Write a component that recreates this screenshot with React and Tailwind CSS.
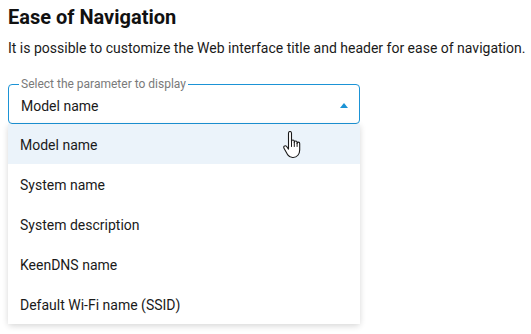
import { useState } from "react";

const options = [
  "Model name",
  "System name",
  "System description",
  "KeenDNS name",
  "Default Wi-Fi name (SSID)",
];

function HandCursor() {
  return (
    <svg width="20" height="28" viewBox="0 0 20 28" className="absolute left-[275px] top-[7px]">
      <path
        d="M5.5 2.2c0-1 .7-1.7 1.5-1.7s1.5.7 1.5 1.7v8.3c0-.9.7-1.5 1.4-1.5s1.4.6 1.4 1.5v1c0-.9.7-1.5 1.4-1.5s1.4.6 1.4 1.5v1c0-.8.6-1.4 1.3-1.4s1.3.6 1.3 1.4v6.5c0 4-2.6 7.5-6.5 7.5H9.5c-2 0-3.6-1-4.7-2.6L1 17.2c-.5-.8-.3-1.8.5-2.2.7-.4 1.6-.2 2.1.5l1.9 2.6V2.2z"
        fill="#fff"
        stroke="#1a1a1a"
        strokeWidth="1.1"
        strokeLinejoin="round"
      />
      <path d="M8.5 10.5v5M11.3 11.5v4M14.1 12.5v3" stroke="#1a1a1a" strokeWidth="1" strokeLinecap="round" />
    </svg>
  );
}

export default function App() {
  const [selected] = useState(options[0]);

  return (
    <div className="min-h-screen w-[531px] bg-white px-2 pt-[5px] text-[#1a1a1a] font-['Roboto',sans-serif]">
      {/* Section header */}
      <h2 className="text-[20px] font-bold leading-[24px] text-[#111]">Ease of Navigation</h2>
      <p className="mt-[10px] whitespace-nowrap text-[14px] leading-[18px]">
        It is possible to customize the Web interface title and header for ease of navigation.
      </p>

      {/* Select field */}
      <div className="relative mt-[27px] w-[352px]">
        <div className="relative flex h-[40px] items-center justify-between rounded-[4px] border border-[#1b93d6] pl-[12px] pr-[11px]">
          <span className="absolute -top-[8px] left-[10px] bg-white px-[2px] text-[12px] leading-[14px] text-[#7a7a7a]">
            Select the parameter to display
          </span>
          <span className="pt-[4px] text-[14px] leading-[22px]">{selected}</span>
          <svg width="8" height="5" viewBox="0 0 8 5" className="mt-[2px]">
            <path d="M0 5 L4 0 L8 5 Z" fill="#1b93d6" />
          </svg>
        </div>

        {/* Dropdown list */}
        <ul className="relative rounded-b-[4px] bg-white shadow-[0_2px_6px_rgba(0,0,0,0.16)]">
          {options.map((opt, i) => (
            <li
              key={opt}
              className={`flex h-[40px] items-center px-[12px] pt-[2px] text-[14px] ${
                i === 0 ? "bg-[#ebf3fa]" : "bg-white"
              }`}
            >
              {opt}
            </li>
          ))}
          <HandCursor />
        </ul>
      </div>
    </div>
  );
}
